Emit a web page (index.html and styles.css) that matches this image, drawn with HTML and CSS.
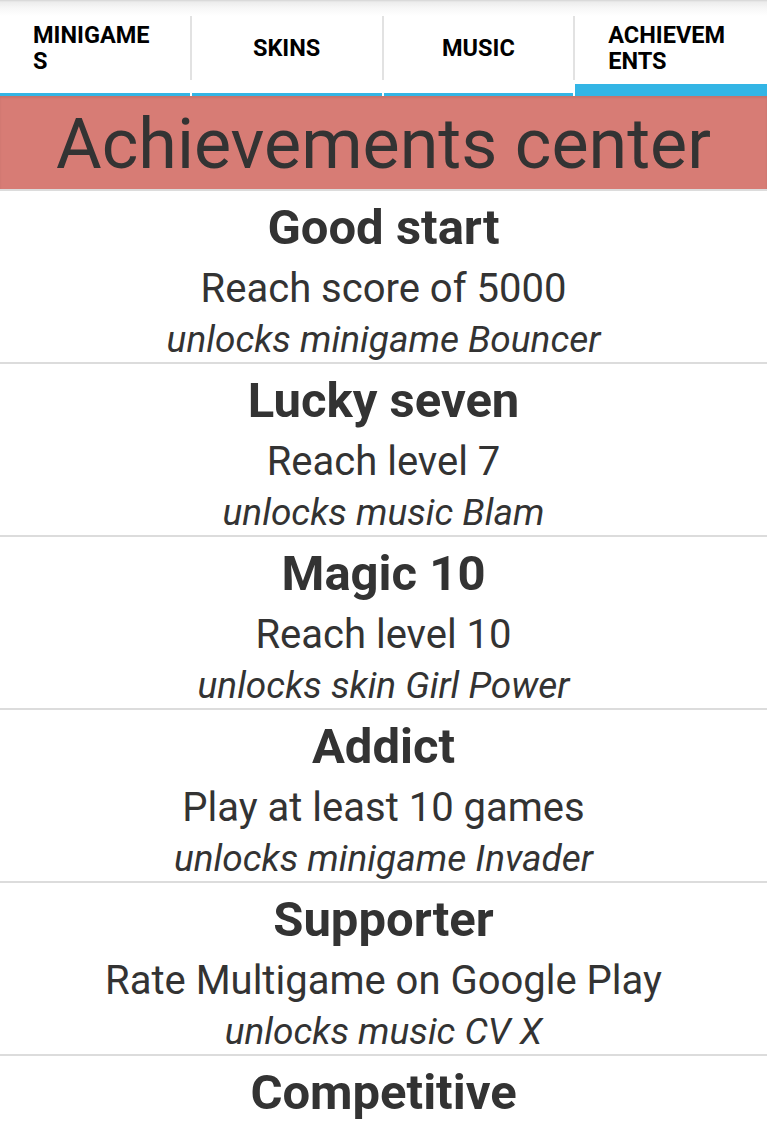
FILE: index.html
```html
<!DOCTYPE html>
<html>
<head>
<meta charset="utf-8">
<link rel="stylesheet" href="styles.css">
</head>
<body>
<div class="topshade"></div>
<nav class="tabs">
  <div class="tab"><span class="label">MINIGAMES</span></div>
  <div class="tab"><span class="label">SKINS</span></div>
  <div class="tab"><span class="label">MUSIC</span></div>
  <div class="tab selected"><span class="label">ACHIEVEMENTS</span></div>
</nav>
<header class="banner">Achievements center</header>
<main class="list">
  <section class="item">
    <h2 class="title">Good start</h2>
    <p class="desc">Reach score of 5000</p>
    <p class="reward">unlocks minigame Bouncer</p>
  </section>
  <section class="item">
    <h2 class="title">Lucky seven</h2>
    <p class="desc">Reach level 7</p>
    <p class="reward">unlocks music Blam</p>
  </section>
  <section class="item">
    <h2 class="title">Magic 10</h2>
    <p class="desc">Reach level 10</p>
    <p class="reward">unlocks skin Girl Power</p>
  </section>
  <section class="item">
    <h2 class="title">Addict</h2>
    <p class="desc">Play at least 10 games</p>
    <p class="reward">unlocks minigame Invader</p>
  </section>
  <section class="item">
    <h2 class="title">Supporter</h2>
    <p class="desc">Rate Multigame on Google Play</p>
    <p class="reward">unlocks music CV X</p>
  </section>
  <section class="item last">
    <h2 class="title">Competitive</h2>
  </section>
</main>
</body>
</html>
```

FILE: styles.css
```css
html, body {
  margin: 0;
  padding: 0;
  background: #ffffff;
  overflow: hidden;
  height: 1134px;
}
body {
  font-family: Roboto, "Liberation Sans", sans-serif;
  color: #333333;
}
.topshade {
  height: 16px;
  background: linear-gradient(#d4d4d4 0px, #ececec 2px, #f7f7f7 8px, #ffffff 16px);
}
.tabs {
  display: grid;
  grid-template-columns: repeat(4, 1fr);
  height: 80px;
}
.tab {
  position: relative;
  display: flex;
  align-items: center;
  justify-content: center;
  padding: 0 33px 13px;
  border-bottom: 3px solid #33b5e5;
  margin-right: 2px;
}
.tab:last-child {
  margin-right: 0;
}
.tab:not(:last-child)::after {
  content: "";
  position: absolute;
  right: -2px;
  top: 0;
  width: 2px;
  height: 64px;
  background: #e2e2e2;
}
.tab.selected {
  border-bottom-width: 12px;
  padding-bottom: 4px;
}
.label {
  font-weight: 700;
  font-size: 23.5px;
  line-height: 26.5px;
  color: #000;
  word-break: break-all;
  text-align: left;
}
.banner {
  background: #d77c75;
  box-shadow: inset 0 2px 2px rgba(0,0,0,0.08);
  border-bottom: 2px solid #dcdcdc;
  font-size: 70px;
  line-height: 97px;
  text-align: center;
  color: #333333;
  box-sizing: border-box;
  height: 95px;
}
.item {
  height: 173px;
  box-sizing: border-box;
  border-bottom: 2px solid #dcdcdc;
  text-align: center;
  padding-top: 7px;
}
.item.last {
  border-bottom: none;
}
.title {
  margin: 0;
  font-size: 49px;
  font-weight: 700;
  line-height: 60px;
}
.desc {
  margin: 0;
  font-size: 40px;
  line-height: 61px;
}
.reward {
  margin: 0;
  font-size: 37px;
  font-style: italic;
  line-height: 41px;
}
```
